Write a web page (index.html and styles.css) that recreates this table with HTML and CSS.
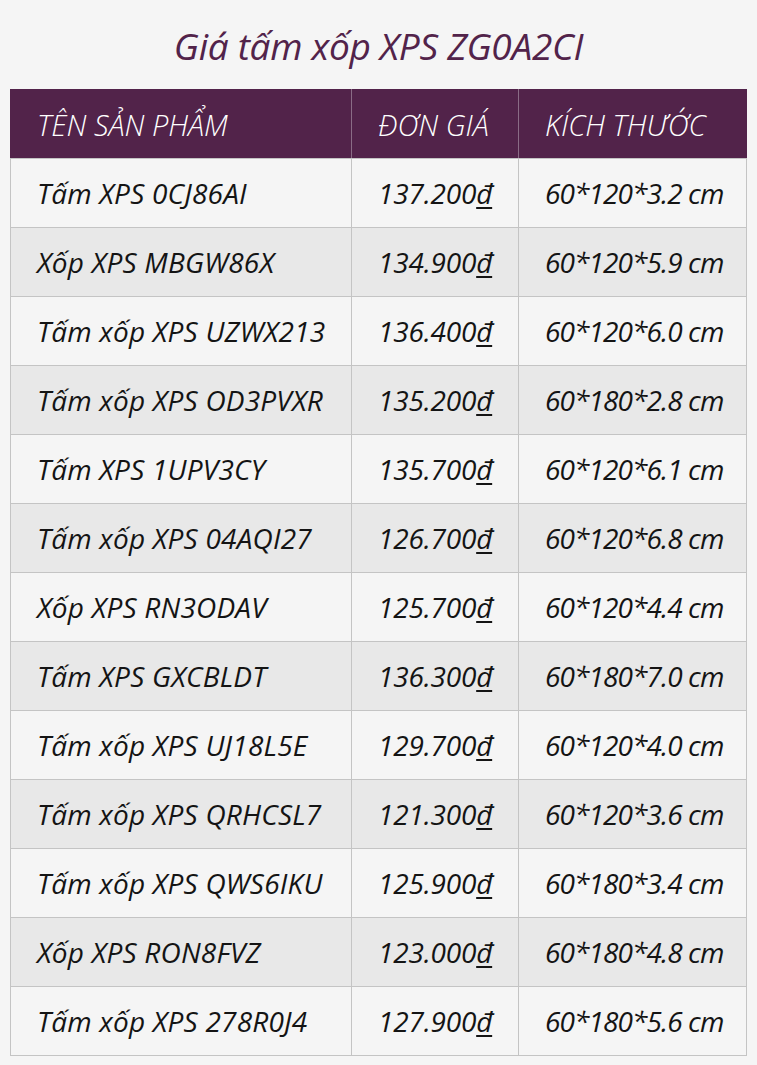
FILE: index.html
```html
<!DOCTYPE html>
<html lang="vi">
<head>
<meta charset="utf-8">
<title>Giá tấm xốp XPS ZG0A2CI</title>
<link rel="stylesheet" href="styles.css">
</head>
<body>
<h1 class="title">Giá tấm xốp XPS ZG0A2CI</h1>
<table class="price-table">
<thead>
<tr><th class="c1">TÊN SẢN PHẨM</th><th class="c2">ĐƠN GIÁ</th><th class="c3">KÍCH THƯỚC</th></tr>
</thead>
<tbody>
<tr><td class="name">Tấm XPS 0CJ86AI</td><td>137.200<u>đ</u></td><td class="size">60*120*3.2 cm</td></tr>
<tr><td class="name">Xốp XPS MBGW86X</td><td>134.900<u>đ</u></td><td class="size">60*120*5.9 cm</td></tr>
<tr><td class="name">Tấm xốp XPS UZWX213</td><td>136.400<u>đ</u></td><td class="size">60*120*6.0 cm</td></tr>
<tr><td class="name">Tấm xốp XPS OD3PVXR</td><td>135.200<u>đ</u></td><td class="size">60*180*2.8 cm</td></tr>
<tr><td class="name">Tấm XPS 1UPV3CY</td><td>135.700<u>đ</u></td><td class="size">60*120*6.1 cm</td></tr>
<tr><td class="name">Tấm xốp XPS 04AQI27</td><td>126.700<u>đ</u></td><td class="size">60*120*6.8 cm</td></tr>
<tr><td class="name">Xốp XPS RN3ODAV</td><td>125.700<u>đ</u></td><td class="size">60*120*4.4 cm</td></tr>
<tr><td class="name">Tấm XPS GXCBLDT</td><td>136.300<u>đ</u></td><td class="size">60*180*7.0 cm</td></tr>
<tr><td class="name">Tấm xốp XPS UJ18L5E</td><td>129.700<u>đ</u></td><td class="size">60*120*4.0 cm</td></tr>
<tr><td class="name">Tấm xốp XPS QRHCSL7</td><td>121.300<u>đ</u></td><td class="size">60*120*3.6 cm</td></tr>
<tr><td class="name">Tấm xốp XPS QWS6IKU</td><td>125.900<u>đ</u></td><td class="size">60*180*3.4 cm</td></tr>
<tr><td class="name">Xốp XPS RON8FVZ</td><td>123.000<u>đ</u></td><td class="size">60*180*4.8 cm</td></tr>
<tr><td class="name">Tấm xốp XPS 278R0J4</td><td>127.900<u>đ</u></td><td class="size">60*180*5.6 cm</td></tr>
</tbody>
</table>
</body>
</html>
```
FILE: styles.css
```css
html, body {
  margin: 0;
  padding: 0;
  background: #f5f5f5;
}
body {
  padding: 0 10px 10px 10px;
  font-family: "Open Sans", "Noto Sans", sans-serif;
  font-style: italic;
  color: #141414;
}
.title {
  margin: 0;
  height: 89px;
  line-height: 92px;
  text-align: center;
  font-weight: 400;
  font-size: 37px;
  letter-spacing: -0.3px;
  color: #52234a;
}
.price-table {
  width: 737px;
  border-collapse: collapse;
  border: 1px solid #c4c4c4;
}
.price-table th,
.price-table td {
  height: 68px;
  padding: 0 0 0 26px;
  text-align: left;
  vertical-align: middle;
  border: 1px solid #c4c4c4;
  font-size: 28px;
  font-weight: 400;
  letter-spacing: -0.2px;
  white-space: nowrap;
}
.price-table td.name { letter-spacing: 0.2px; }
.price-table td.size { letter-spacing: -0.9px; }
.price-table th {
  background: #52234a;
  color: #ffffff;
  font-size: 29px;
  font-weight: 300;
  letter-spacing: 0;
  border-top-color: #52234a;
  border-left-color: #52234a;
  border-right-color: #8a6c86;
  border-bottom-color: #c4c4c4;
}
.price-table th.c3 { border-right-color: #52234a; }
.price-table .c1 { width: 314px; }
.price-table .c2 { width: 140px; }
.price-table tbody tr:nth-child(odd) td { background: #f5f5f5; }
.price-table tbody tr:nth-child(even) td { background: #e8e8e8; }
.price-table u { text-decoration-thickness: 2px; text-underline-offset: 3px; }
```
